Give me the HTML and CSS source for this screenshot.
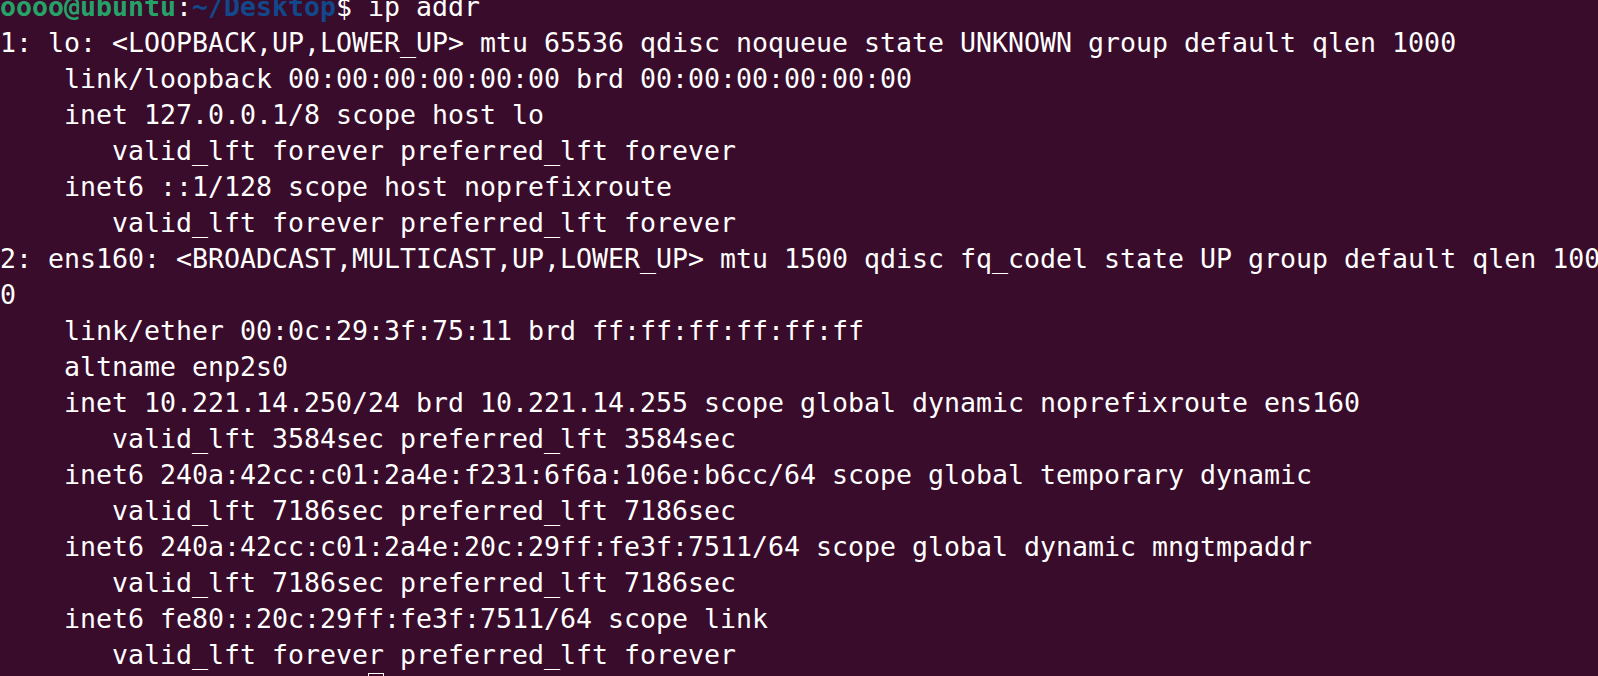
FILE: index.html
```html
<!DOCTYPE html>
<html lang="en">
<head>
<meta charset="utf-8">
<title>Terminal</title>
<link rel="stylesheet" href="styles.css">
</head>
<body>
<main class="terminal">
<pre class="screen"><span class="user">oooo@ubuntu</span>:<span class="path">~/Desktop</span>$ ip addr
1: lo: &lt;LOOPBACK,UP,LOWER_UP&gt; mtu 65536 qdisc noqueue state UNKNOWN group default qlen 1000
    link/loopback 00:00:00:00:00:00 brd 00:00:00:00:00:00
    inet 127.0.0.1/8 scope host lo
       valid_lft forever preferred_lft forever
    inet6 ::1/128 scope host noprefixroute
       valid_lft forever preferred_lft forever
2: ens160: &lt;BROADCAST,MULTICAST,UP,LOWER_UP&gt; mtu 1500 qdisc fq_codel state UP group default qlen 100
0
    link/ether 00:0c:29:3f:75:11 brd ff:ff:ff:ff:ff:ff
    altname enp2s0
    inet 10.221.14.250/24 brd 10.221.14.255 scope global dynamic noprefixroute ens160
       valid_lft 3584sec preferred_lft 3584sec
    inet6 240a:42cc:c01:2a4e:f231:6f6a:106e:b6cc/64 scope global temporary dynamic
       valid_lft 7186sec preferred_lft 7186sec
    inet6 240a:42cc:c01:2a4e:20c:29ff:fe3f:7511/64 scope global dynamic mngtmpaddr
       valid_lft 7186sec preferred_lft 7186sec
    inet6 fe80::20c:29ff:fe3f:7511/64 scope link
       valid_lft forever preferred_lft forever
                       <span class="cursor"> </span></pre>
</main>
</body>
</html>
```
FILE: styles.css
```css
html, body {
  margin: 0;
  padding: 0;
  background: #380c2a;
  height: 676px;
  overflow: hidden;
}

.terminal {
  width: 1598px;
  height: 676px;
  overflow: hidden;
  background: #380c2a;
}

.screen {
  margin: -11px 0 0 0;
  padding: 0;
  font-family: "DejaVu Sans Mono", "Liberation Mono", monospace;
  font-size: 26.58px;
  line-height: 36px;
  color: #ffffff;
  white-space: pre;
}

.user {
  color: #26a269;
  font-weight: bold;
}

.path {
  color: #12488b;
  font-weight: bold;
}

.cursor {
  display: inline-block;
  width: 14px;
  height: 34px;
  border: 1px solid #ffffff;
  vertical-align: top;
  margin-top: 0;
}
```
